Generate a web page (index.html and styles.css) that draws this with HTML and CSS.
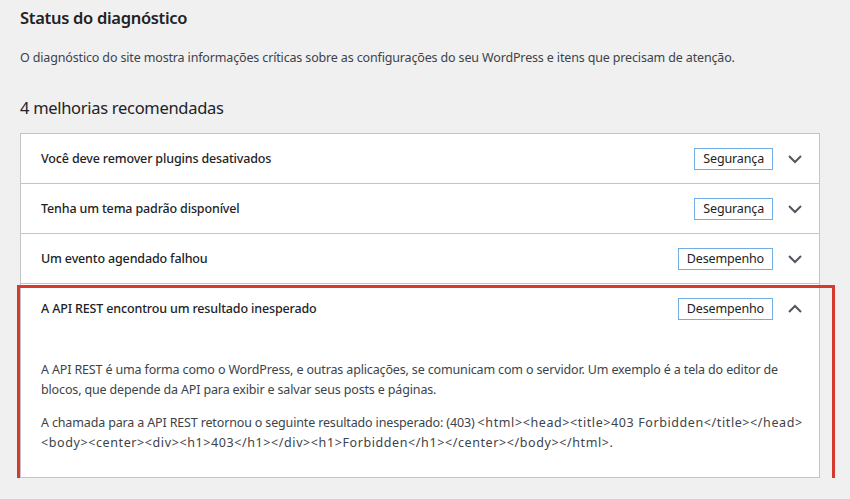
FILE: index.html
```html
<!DOCTYPE html>
<html lang="pt-BR">
<head>
    <meta charset="UTF-8">
    <meta name="viewport" content="width=device-width, initial-scale=1.0">
    <title>Status do diagnóstico</title>
    <link rel="stylesheet" href="styles.css">
</head>
<body>
    <div class="page">
        <h1 class="page-title">Status do diagnóstico</h1>
        <p class="page-desc">O diagnóstico do site mostra informações críticas sobre as configurações do seu WordPress e itens que precisam de atenção.</p>

        <h2 class="section-title">4 melhorias recomendadas</h2>

        <div class="accordion">
            <div class="item">
                <div class="item-head">
                    <span class="item-title">Você deve remover plugins desativados</span>
                    <span class="badge">Segurança</span>
                    <svg class="chevron" viewBox="0 0 16 16"><polyline points="2,5 8,11 14,5"/></svg>
                </div>
            </div>
            <div class="item">
                <div class="item-head">
                    <span class="item-title">Tenha um tema padrão disponível</span>
                    <span class="badge">Segurança</span>
                    <svg class="chevron" viewBox="0 0 16 16"><polyline points="2,5 8,11 14,5"/></svg>
                </div>
            </div>
            <div class="item">
                <div class="item-head">
                    <span class="item-title">Um evento agendado falhou</span>
                    <span class="badge">Desempenho</span>
                    <svg class="chevron" viewBox="0 0 16 16"><polyline points="2,5 8,11 14,5"/></svg>
                </div>
            </div>
            <div class="item open">
                <div class="item-head">
                    <span class="item-title">A API REST encontrou um resultado inesperado</span>
                    <span class="badge">Desempenho</span>
                    <svg class="chevron" viewBox="0 0 16 16"><polyline points="2,11 8,5 14,11"/></svg>
                </div>
                <div class="item-body">
                    <p>A API REST é uma forma como o WordPress, e outras aplicações, se comunicam com o servidor. Um exemplo é a tela do editor de blocos, que depende da API para exibir e salvar seus posts e páginas.</p>
                    <p>A chamada para a API REST retornou o seguinte resultado inesperado: (403) <span class="response">&lt;html&gt;&lt;head&gt;&lt;title&gt;403 Forbidden&lt;/title&gt;&lt;/head&gt;</span> <span class="response">&lt;body&gt;&lt;center&gt;&lt;div&gt;&lt;h1&gt;403&lt;/h1&gt;&lt;/div&gt;&lt;h1&gt;Forbidden&lt;/h1&gt;&lt;/center&gt;&lt;/body&gt;&lt;/html&gt;</span>.</p>
                </div>
                <div class="highlight"></div>
            </div>
        </div>
    </div>
</body>
</html>
```

FILE: styles.css
```css
body {
    margin: 0;
    background-color: #f0f0f1;
    font-family: "Noto Sans", "Open Sans", sans-serif;
    font-size: 12.5px;
    letter-spacing: -0.15px;
    color: #3c434a;
}

.page {
    padding: 6px 30px 0 20px;
}

.page-title {
    margin: 0;
    font-size: 16.5px;
    font-weight: 600;
    letter-spacing: -0.3px;
    line-height: 24px;
    color: #1d2327;
}

.page-desc {
    margin: 18px 0 0;
    line-height: 20px;
}

.section-title {
    margin: 28px 0 13px;
    font-size: 16.5px;
    font-weight: 400;
    letter-spacing: -0.3px;
    line-height: 24px;
    color: #1d2327;
}

/* Akordeon */
.accordion {
    background-color: #fff;
    border: 1px solid #c3c4c7;
}

.item {
    position: relative;
}

.item + .item {
    border-top: 1px solid #c3c4c7;
}

.item-head {
    display: flex;
    align-items: center;
    height: 49px;
    padding: 0 16px 0 20px;
}

.item-title {
    flex: 1;
    font-weight: 500;
    color: #1d2327;
}

.badge {
    border: 1px solid #72aee6;
    padding: 0 8px;
    line-height: 20px;
    color: #1d2327;
    margin-right: 14px;
}

.chevron {
    width: 16px;
    height: 16px;
    fill: none;
    stroke: #50575e;
    stroke-width: 2;
}

.item-body {
    padding: 27px 4px 11px 20px;
    line-height: 19.5px;
}

.item-body p {
    margin: 0 0 14px;
}

/* HTML yanıtı, Segoe UI'daki geniş < > işaretlerine yakın dursun */
.response {
    letter-spacing: 0.6px;
}

.highlight {
    position: absolute;
    top: 1px;
    left: -4px;
    right: -16px;
    bottom: -6px;
    border: 3px solid #d63a2c;
    pointer-events: none;
}
```
